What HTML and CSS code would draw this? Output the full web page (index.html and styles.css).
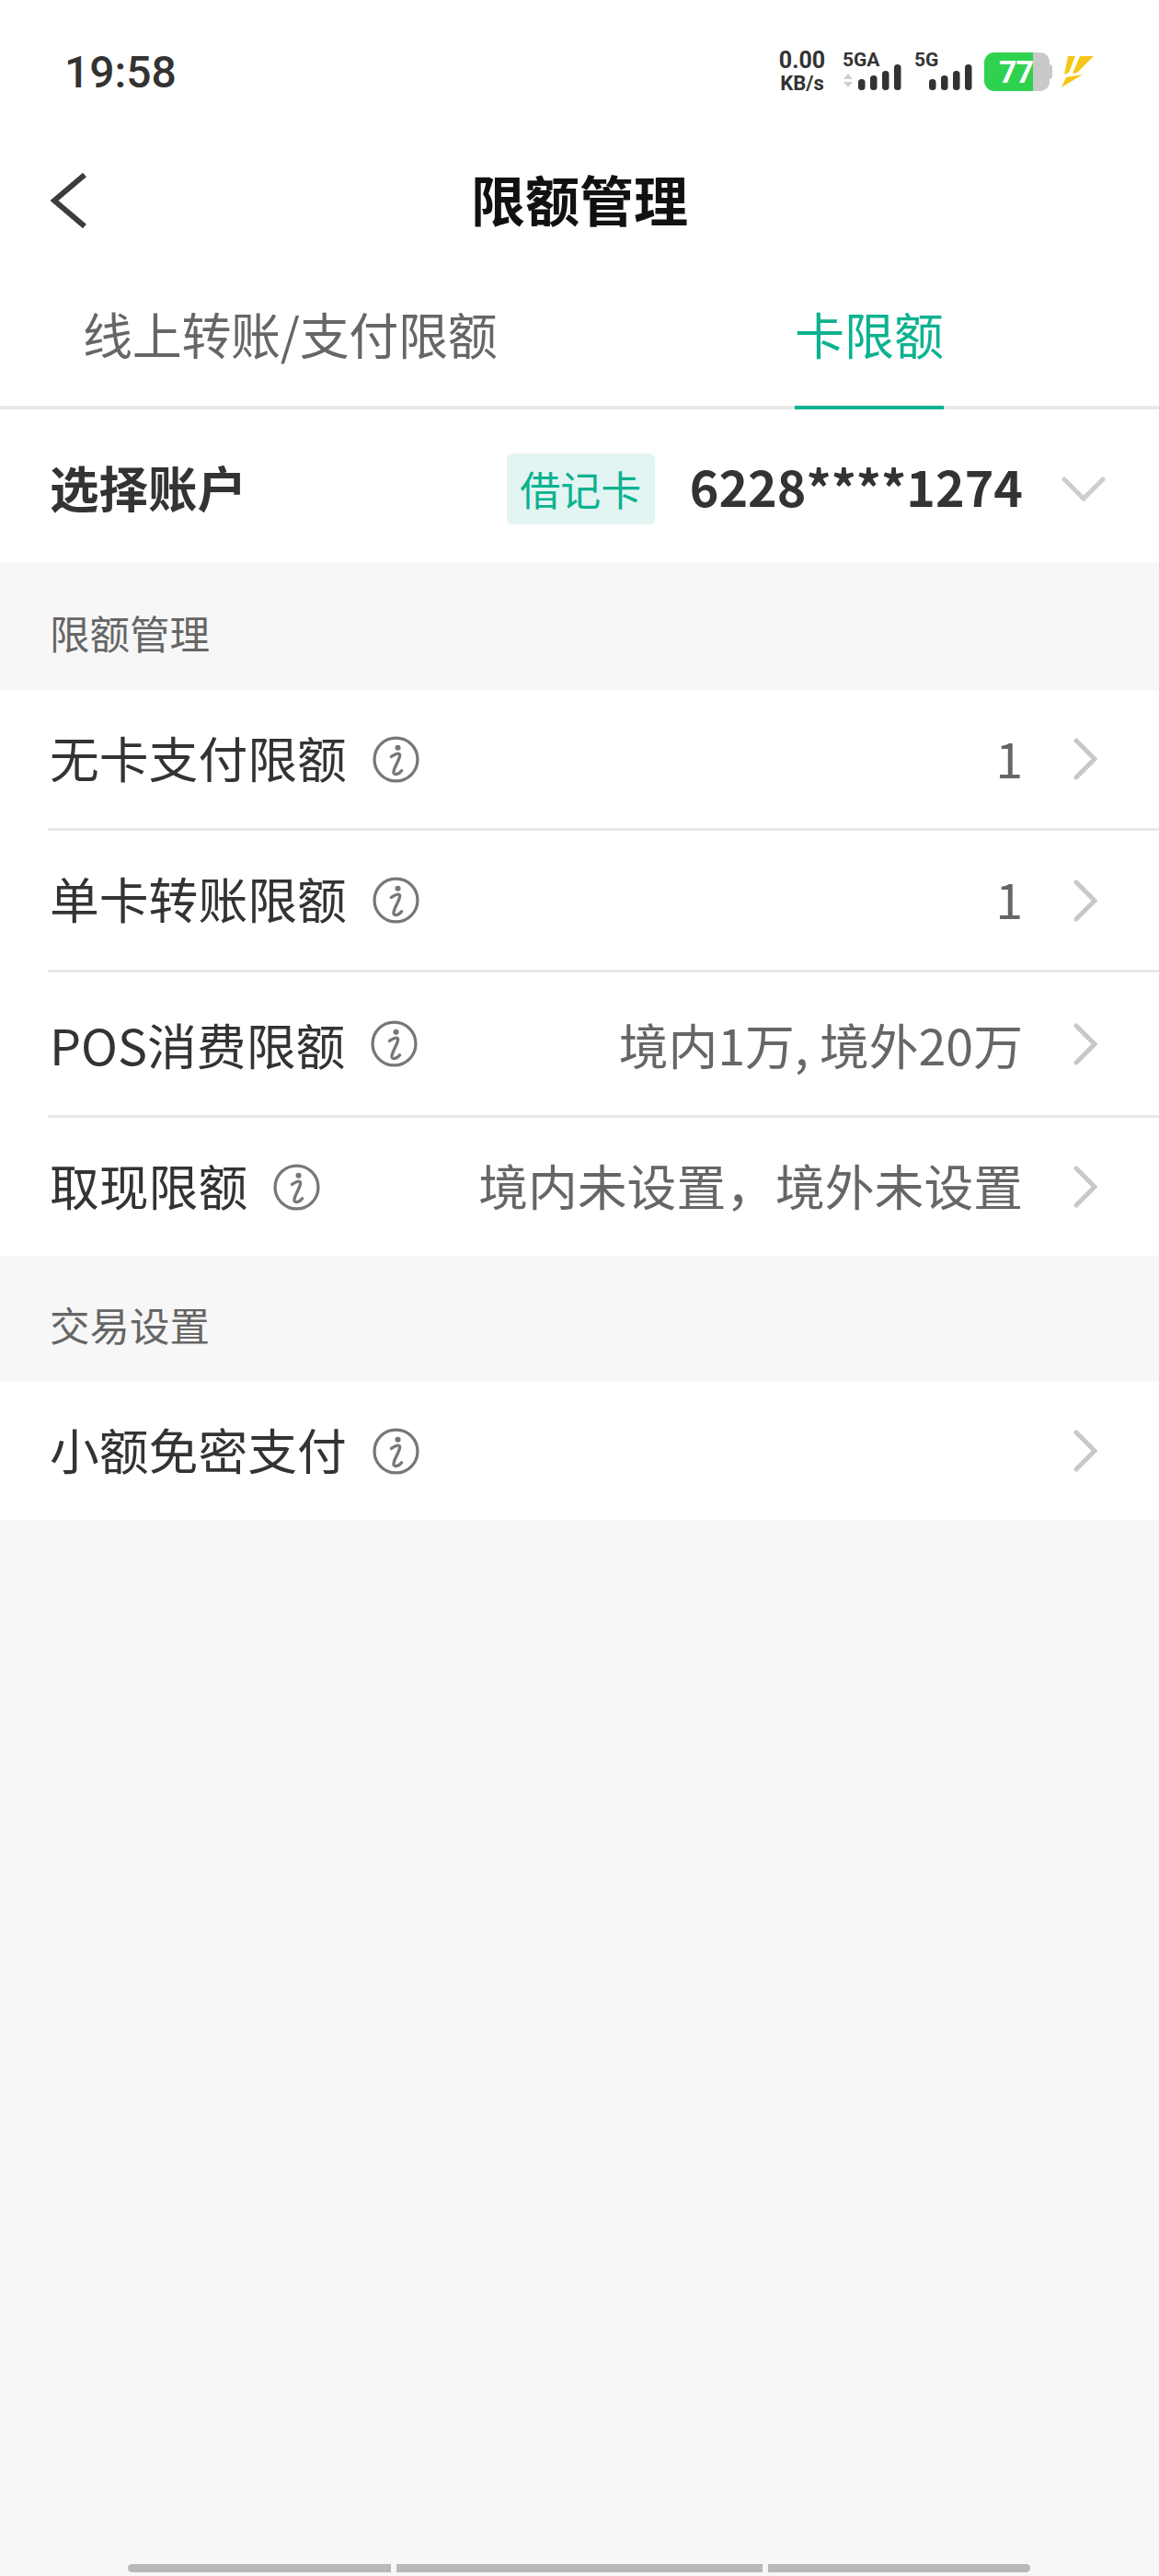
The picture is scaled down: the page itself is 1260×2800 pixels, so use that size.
FILE: index.html
```html
<!DOCTYPE html>
<html>

<head>
    <title>限额管理</title>
    <meta charset="utf-8">
    <meta name="viewport" content="width=device-width, initial-scale=1">
    <link rel="stylesheet" href="styles.css">
</head>

<body>
    <div class="status_bar">
        <div class="time">19:58</div>
        <div class="status_icons">
            <div class="speed"><span>0.00</span><span class="speed_unit">KB/s</span></div>
            <div class="net net_a">
                <span class="net_label">5GA</span>
                <svg class="signal" width="64" height="30" viewBox="0 0 64 30">
                    <path d="M1 17l5-6 5 6zM1 20h10l-5 6z" fill="#cfcfcf"/>
                    <rect x="17" y="17" width="7.500" height="12" rx="3.500" fill="#333"/>
                    <rect x="30" y="13" width="7.500" height="16" rx="3.500" fill="#333"/>
                    <rect x="43" y="8" width="7.500" height="21" rx="3.500" fill="#333"/>
                    <rect x="56" y="1" width="7.500" height="28" rx="3.500" fill="#333"/>
                </svg>
            </div>
            <div class="net net_b">
                <span class="net_label">5G</span>
                <svg class="signal" width="48" height="30" viewBox="0 0 48 30">
                    <rect x="1" y="17" width="7.500" height="12" rx="3.500" fill="#333"/>
                    <rect x="14" y="13" width="7.500" height="16" rx="3.500" fill="#333"/>
                    <rect x="27" y="8" width="7.500" height="21" rx="3.500" fill="#333"/>
                    <rect x="40" y="1" width="7.500" height="28" rx="3.500" fill="#333"/>
                </svg>
            </div>
            <div class="battery">
                <div class="battery_level">77</div>
                <div class="battery_rest"></div>
                <div class="battery_nub"></div>
            </div>
            <svg class="bolt" width="36" height="37" viewBox="0 0 36 37">
                <path d="M7 1h8L8 19l-5 2zM20 1h15L17 19l-5 1z" fill="#f6c618"/>
                <path d="M5 24l18-3L0 35z" fill="#f6c618"/>
            </svg>
        </div>
    </div>

    <div class="nav_bar">
        <svg class="back" width="40" height="60" viewBox="0 0 40 60">
            <path d="M37 2L4 30l33 28" fill="none" stroke="#3c3c3c" stroke-width="6"/>
        </svg>
        <div class="nav_title">限额管理</div>
    </div>

    <div class="tabs">
        <div class="tab tab_long">线上转账/支付限额</div>
        <div class="tab tab_active">卡限额</div>
    </div>

    <div class="account">
        <div class="account_label">选择账户</div>
        <div class="card_tag">借记卡</div>
        <div class="card_number">6228****1274</div>
        <svg class="arrow_down" width="48" height="28" viewBox="0 0 48 28">
            <path d="M3 3l21 21L45 3" fill="none" stroke="#cdcdcd" stroke-width="5" stroke-linecap="round"/>
        </svg>
    </div>

    <div class="section_title">限额管理</div>
    <div class="list">
        <div class="row">
            <span class="row_label">无卡支付限额</span>
            <svg class="info" viewBox="0 0 50 50"><use href="#info_icon"/></svg>
            <span class="row_value">1</span>
            <svg class="arrow_right" viewBox="0 0 26 46"><use href="#arrow_icon"/></svg>
        </div>
        <div class="row">
            <span class="row_label">单卡转账限额</span>
            <svg class="info" viewBox="0 0 50 50"><use href="#info_icon"/></svg>
            <span class="row_value">1</span>
            <svg class="arrow_right" viewBox="0 0 26 46"><use href="#arrow_icon"/></svg>
        </div>
        <div class="row row_tall">
            <span class="row_label">POS消费限额</span>
            <svg class="info" viewBox="0 0 50 50"><use href="#info_icon"/></svg>
            <span class="row_value">境内1万, 境外20万</span>
            <svg class="arrow_right" viewBox="0 0 26 46"><use href="#arrow_icon"/></svg>
        </div>
        <div class="row">
            <span class="row_label">取现限额</span>
            <svg class="info" viewBox="0 0 50 50"><use href="#info_icon"/></svg>
            <span class="row_value">境内未设置，境外未设置</span>
            <svg class="arrow_right" viewBox="0 0 26 46"><use href="#arrow_icon"/></svg>
        </div>
    </div>

    <div class="section_title section_short">交易设置</div>
    <div class="list">
        <div class="row">
            <span class="row_label">小额免密支付</span>
            <svg class="info" viewBox="0 0 50 50"><use href="#info_icon"/></svg>
            <span class="row_value"></span>
            <svg class="arrow_right" viewBox="0 0 26 46"><use href="#arrow_icon"/></svg>
        </div>
    </div>

    <div class="gesture">
        <div class="gesture_part gesture_left"></div>
        <div class="gesture_part gesture_mid"></div>
        <div class="gesture_part gesture_right"></div>
    </div>

    <svg width="0" height="0" class="defs">
        <defs>
            <g id="info_icon">
                <circle cx="25" cy="25" r="23" fill="none" stroke="#777" stroke-width="3.200"/>
                <circle cx="27" cy="12.500" r="3" fill="#777"/>
                <path d="M20 22c3-2 8-5 9-2 1 4-7 14-6.500 19 .5 3 5.500 2 8.500-2" fill="none" stroke="#777" stroke-width="3.300" stroke-linecap="round"/>
            </g>
            <path id="arrow_icon" d="M3 3l20 20L3 43" fill="none" stroke="#c8c8c8" stroke-width="5" stroke-linecap="round"/>
        </defs>
    </svg>
</body>

</html>
```

FILE: styles.css
```css
* {
    box-sizing: border-box;
}

body {
    font-family: "Noto Sans CJK SC", "Noto Sans", sans-serif;
    display: flex;
    flex-direction: column;
    width: 1260px;
    height: 2800px;
    margin: 0;
    background-color: #F7F7F7;
    color: #333333;
    overflow: hidden;
}

.defs {
    position: absolute;
}

.status_bar {
    display: flex;
    justify-content: space-between;
    align-items: center;
    height: 156px;
    padding: 0 70px 0 70px;
    background-color: #FFFFFF;
}

.time {
    font-family: "Roboto", sans-serif;
    font-size: 48px;
    font-weight: 500;
    color: #333333;
}

.status_icons {
    display: flex;
    align-items: center;
    height: 42px;
}

.speed {
    display: flex;
    flex-direction: column;
    align-items: center;
    width: 54px;
    font-family: "Roboto", sans-serif;
    font-size: 25px;
    font-weight: 700;
    line-height: 22px;
}

.speed_unit {
    margin-top: 3px;
    font-size: 22px;
    line-height: 21px;
}

.net {
    position: relative;
    height: 42px;
    margin-left: 17px;
}

.net_a {
    width: 64px;
}

.net_b {
    width: 63px;
    margin-left: 14px;
}

.net_label {
    position: absolute;
    left: 0;
    top: -3px;
    font-family: "Roboto", sans-serif;
    font-size: 21px;
    font-weight: 700;
    line-height: 22px;
}

.signal {
    position: absolute;
    right: 0;
    top: 12px;
}

.battery {
    display: flex;
    align-items: center;
    width: 74px;
    height: 42px;
    margin-left: 13px;
}

.battery_level {
    width: 53px;
    height: 42px;
    padding-left: 16px;
    border-radius: 11px 0 0 11px;
    background-color: #2ED24F;
    color: #FFFFFF;
    font-family: "Roboto", sans-serif;
    font-size: 34px;
    font-weight: 700;
    line-height: 42px;
    letter-spacing: -1px;
}

.battery_rest {
    width: 18px;
    height: 42px;
    border-radius: 0 10px 10px 0;
    background-color: #C9C9C9;
}

.battery_nub {
    width: 3px;
    height: 16px;
    border-radius: 0 3px 3px 0;
    background-color: #C9C9C9;
}

.bolt {
    margin-left: 10px;
}

.nav_bar {
    position: relative;
    display: flex;
    justify-content: center;
    align-items: center;
    height: 124px;
    background-color: #FFFFFF;
}

.back {
    position: absolute;
    left: 55px;
    top: 32px;
}

.nav_title {
    font-size: 59px;
    font-weight: 700;
    color: #111111;
    margin-bottom: 5px;
}

.tabs {
    display: flex;
    justify-content: space-between;
    height: 165px;
    padding: 0 234px 0 90px;
    border-bottom: 4px solid #E8E8E8;
    background-color: #FFFFFF;
}

.tab {
    height: 165px;
    padding-top: 47px;
    font-size: 54px;
    line-height: 72px;
    color: #666666;
}

.tab_long {
    letter-spacing: -0.3px;
}

.tab_active {
    color: #0DB290;
    border-bottom: 4px solid #0DB290;
}

.account {
    display: flex;
    align-items: center;
    height: 167px;
    padding: 0 58px 0 54px;
    background-color: #FFFFFF;
}

.account_label {
    flex-grow: 1;
    font-size: 53.500px;
    font-weight: 700;
    margin-bottom: 1px;
}

.card_tag {
    width: 161px;
    height: 77px;
    margin-top: 6px;
    border-radius: 6px;
    background-color: #E3F5F2;
    color: #0DB290;
    font-size: 44px;
    line-height: 77px;
    text-align: center;
}

.card_number {
    margin-left: 38px;
    margin-bottom: 2px;
    font-size: 53.700px;
    font-weight: 700;
}

.arrow_down {
    margin-top: 6px;
    margin-left: 42px;
}

.section_title {
    height: 138px;
    padding: 46px 54px 0 54px;
    font-size: 43.500px;
    line-height: 60px;
    color: #666666;
}

.section_short {
    height: 137px;
    padding-top: 45px;
}

.list {
    background-color: #FFFFFF;
}

.row {
    display: flex;
    align-items: center;
    height: 153px;
    margin-left: 52px;
    padding: 0 67px 0 2px;
    border-bottom: 3px solid #E8E8E8;
}

.row:nth-child(2) {
    height: 154px;
}

.row:nth-child(3) {
    height: 158px;
}

.row:last-child {
    height: 150px;
    border-bottom: 0;
}

.row_label {
    margin-bottom: 6px;
    font-size: 53.800px;
}

.info {
    width: 51px;
    height: 51px;
    margin-left: 28px;
}

.row_value {
    flex-grow: 1;
    margin-bottom: 6px;
    font-size: 53.800px;
    color: #666666;
    text-align: right;
}

.row_tall .row_label,
.row_tall .row_value {
    margin-bottom: 0;
}

.arrow_right {
    width: 26px;
    height: 46px;
    margin-left: 55px;
}

.gesture {
    display: flex;
    gap: 6px;
    margin-top: auto;
    padding: 0 0 4px 139px;
}

.gesture_part {
    height: 9px;
    background-color: #B9B9B9;
}

.gesture_left {
    width: 286px;
    border-radius: 5px 0 0 5px;
}

.gesture_mid {
    width: 398px;
}

.gesture_right {
    width: 285px;
    border-radius: 0 5px 5px 0;
}
```
